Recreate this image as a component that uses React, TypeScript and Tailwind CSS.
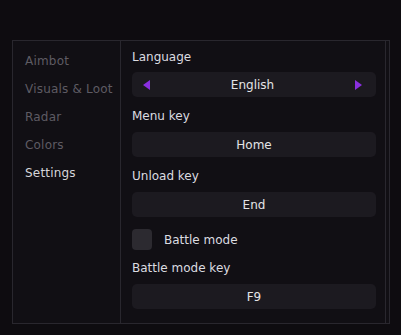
const TABS = ["Aimbot", "Visuals & Loot", "Radar", "Colors", "Settings"];

function ValueBox({ children }: { children: React.ReactNode }) {
  return (
    <div className="h-[25px] rounded-[5px] bg-[#1c1a20] flex items-center justify-center text-[12px] text-[#e4e4e6]">
      {children}
    </div>
  );
}

function Label({ children, className = "" }: { children: React.ReactNode; className?: string }) {
  return <div className={`h-4 leading-4 text-[12px] text-[#dcdce0] ${className}`}>{children}</div>;
}

export default function App() {
  return (
    <div
      className="w-[401px] h-[335px] bg-[#0e0c10] pt-[40px] pl-[12px]"
      style={{ fontFamily: '"DejaVu Sans", Verdana, sans-serif' }}
    >
      <div className="w-[378px] h-[284px] border border-[#29272e] bg-[#110f14] flex pr-[3px]">
        {/* Sidebar */}
        <div className="w-[108px] border-r border-[#29272e] pt-[12px] pl-[12px] flex flex-col">
          {TABS.map((t) => (
            <div
              key={t}
              className={`h-[28px] leading-4 text-[12px] tracking-[0.2px] ${t === "Settings" ? "text-[#d6d6da]" : "text-[#5e5b63]"}`}
            >
              {t}
            </div>
          ))}
        </div>

        {/* Content */}
        <div className="flex-1 border-r border-[#29272e] pt-[8px] pl-[11px] pr-[9px] flex flex-col">
          <Label>Language</Label>
          <div className="mt-[7px] h-[25px] rounded-[5px] bg-[#1c1a20] flex items-center justify-between pl-[11px] pr-[14px] text-[12px] text-[#e4e4e6]">
            <svg width="7" height="10" viewBox="0 0 7 10">
              <path d="M7 0 L0 5 L7 10 Z" fill="#8a2fe0" />
            </svg>
            <span>English</span>
            <svg width="7" height="10" viewBox="0 0 7 10">
              <path d="M0 0 L7 5 L0 10 Z" fill="#8a2fe0" />
            </svg>
          </div>

          <Label className="mt-[11px]">Menu key</Label>
          <div className="mt-[8px]">
            <ValueBox>Home</ValueBox>
          </div>

          <Label className="mt-[11px]">Unload key</Label>
          <div className="mt-[8px]">
            <ValueBox>End</ValueBox>
          </div>

          <div className="mt-[12px] flex items-center gap-[12px]">
            <div className="w-[20px] h-[21px] rounded-[4px] bg-[#2c2a30]" />
            <span className="text-[12px] text-[#dcdce0]">Battle mode</span>
          </div>

          <Label className="mt-[10px]">Battle mode key</Label>
          <div className="mt-[8px]">
            <ValueBox>F9</ValueBox>
          </div>
        </div>
      </div>
    </div>
  );
}
